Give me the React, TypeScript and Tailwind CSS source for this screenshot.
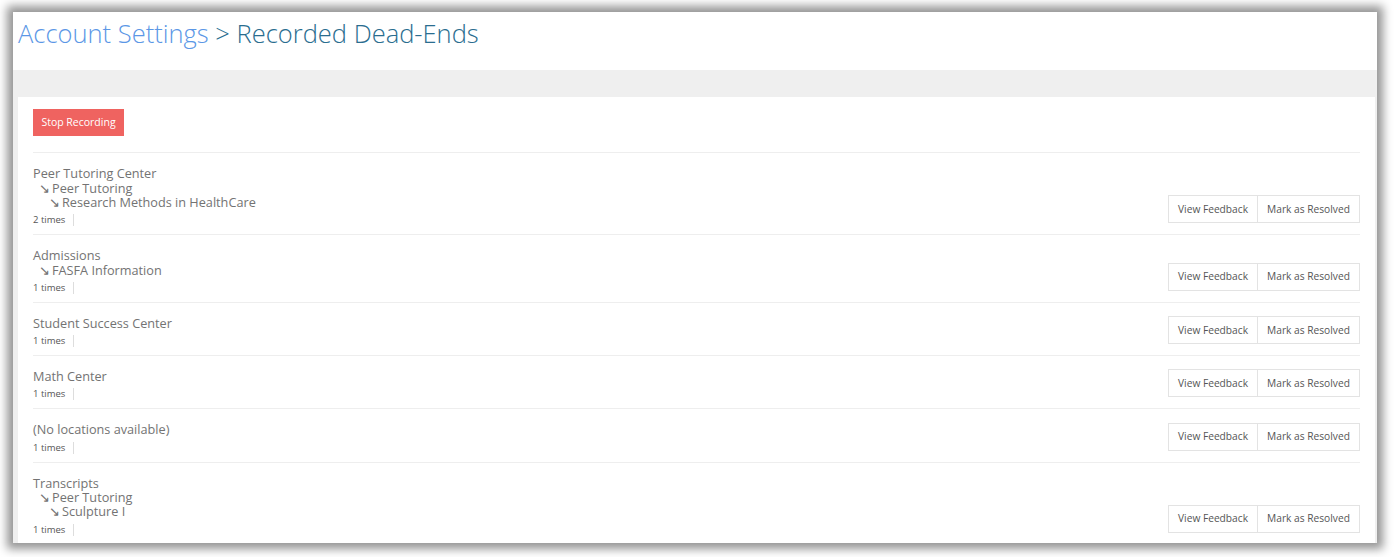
import React from 'react';

interface DeadEnd {
  path: string[];
  count: number;
}

const deadEnds: DeadEnd[] = [
  { path: ['Peer Tutoring Center', 'Peer Tutoring', 'Research Methods in HealthCare'], count: 2 },
  { path: ['Admissions', 'FASFA Information'], count: 1 },
  { path: ['Student Success Center'], count: 1 },
  { path: ['Math Center'], count: 1 },
  { path: ['(No locations available)'], count: 1 },
  { path: ['Transcripts', 'Peer Tutoring', 'Sculpture I'], count: 1 },
];

const indents = ['pl-0', 'pl-[6px]', 'pl-[16px]'];

function DeadEndRow({ item }: { item: DeadEnd }) {
  return (
    <div className="flex items-end justify-between border-t border-[#eeeeee] pt-[13px] pb-[8px]">
      <div>
        {item.path.map((p, i) => (
          <div
            key={i}
            className={`h-[14.3px] overflow-visible whitespace-nowrap text-[12.7px] leading-[14.3px] text-[#737373] ${indents[i]}`}
          >
            {i > 0 && <span className="mr-[2px] inline-block h-[14px] align-top leading-[14px]">↘</span>}
            {p}
          </div>
        ))}
        <div className="mt-[5px] flex">
          <span className="h-[12px] border-r border-[#dddddd] pr-[8px] text-[9.5px] leading-[12px] text-[#555555]">
            {item.count} times
          </span>
        </div>
      </div>
      {/* Actions */}
      <div className="mb-[3px] flex">
        <button className="h-[28px] w-[90px] border border-[#e3e3e3] bg-white text-[10.2px] text-[#555555]">
          View Feedback
        </button>
        <button className="-ml-px h-[28px] w-[103px] border border-[#e3e3e3] bg-white text-[10.2px] text-[#555555]">
          Mark as Resolved
        </button>
      </div>
    </div>
  );
}

export default function App() {
  return (
    <div className="h-[557px] w-[1397px] overflow-hidden bg-white pl-[13px] pt-[12px] font-['Open_Sans',sans-serif]">
      <div className="h-[531px] w-[1364px] overflow-hidden bg-white shadow-[0_0_9px_6px_rgba(0,0,0,0.42)]">
        {/* Header */}
        <div className="h-[58px] pl-[5px] pt-[5px]">
          <h1 className="text-[25.5px] font-light leading-[33px]">
            <span className="text-[#5b97e6]">Account Settings</span>
            <span className="text-[#2a6d8f]"> &gt; Recorded Dead-Ends</span>
          </h1>
        </div>

        <div className="bg-[#efefef] pl-[5px] pr-[2px] pt-[27px]">
          <div className="bg-white px-[15px] pt-[11px]">
            <button className="h-[27px] w-[91px] bg-[#ef6360] text-[10.5px] text-white">
              Stop Recording
            </button>
            <div className="mt-[16px]">
              {deadEnds.map((d, i) => (
                <DeadEndRow key={i} item={d} />
              ))}
            </div>
          </div>
        </div>
      </div>
    </div>
  );
}
